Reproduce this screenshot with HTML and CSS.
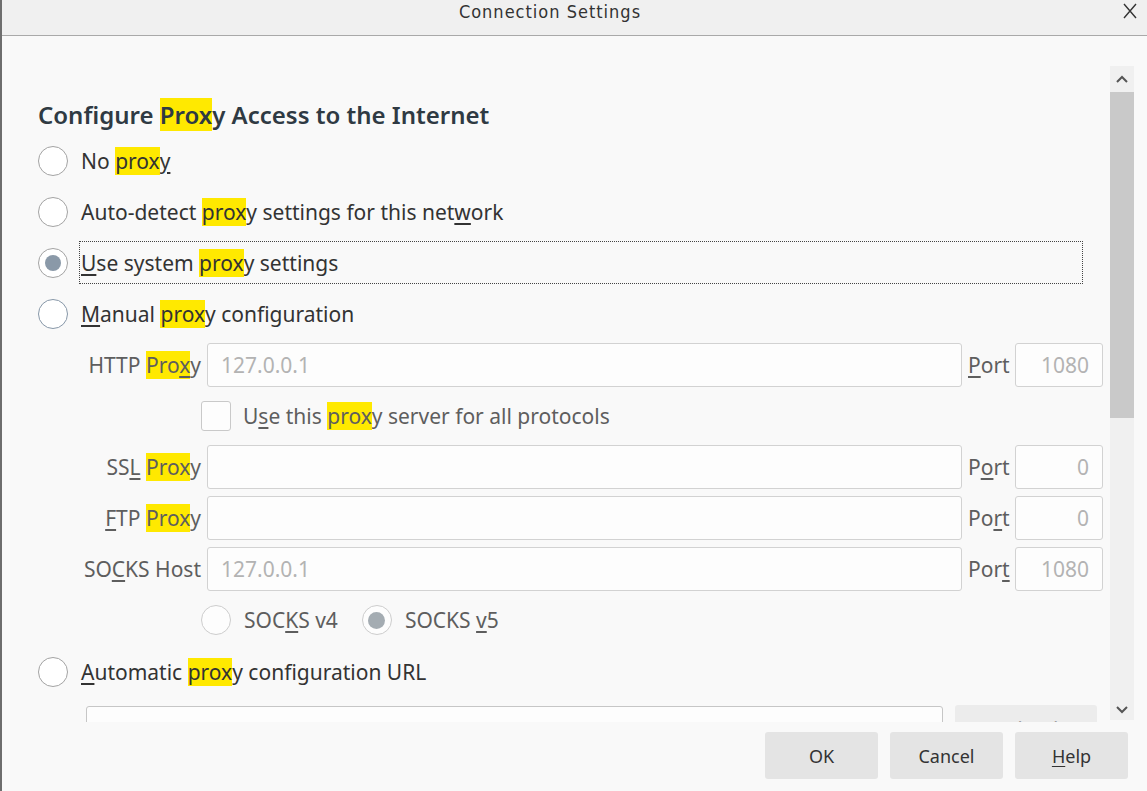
FILE: index.html
```html
<!DOCTYPE html>
<html lang="en">
<head>
  <meta charset="UTF-8" />
  <title>Connection Settings</title>
  <link rel="stylesheet" href="styles.css">
</head>
<body>

<div class="dialog">
  <header class="titlebar">
    <div class="title">Connection Settings</div>
    <button class="close" aria-label="Close">
      <svg width="14" height="16" viewBox="0 0 14 16">
        <path d="M1 1 L13 15 M13 1 L1 15" stroke="#333" stroke-width="1.4" fill="none"/>
      </svg>
    </button>
  </header>

  <div class="pane">
    <div class="content">
      <h1>Configure <mark>Prox</mark>y Access to the Internet</h1>

      <div class="radio-row">
        <span class="radio"></span>
        <span class="label">No <mark>prox</mark><u>y</u></span>
      </div>
      <div class="radio-row">
        <span class="radio"></span>
        <span class="label">Auto-detect <mark>prox</mark>y settings for this net<u>w</u>ork</span>
      </div>
      <div class="radio-row">
        <span class="radio checked"></span>
        <span class="label focused"><span><u>U</u>se system <mark>prox</mark>y settings</span></span>
      </div>
      <div class="radio-row">
        <span class="radio hover"></span>
        <span class="label"><u>M</u>anual <mark>prox</mark>y configuration</span>
      </div>

      <div class="manual">
        <span class="field-label">HTTP <mark>Pro<u>x</u></mark>y</span>
        <div class="input"><span class="placeholder">127.0.0.1</span></div>
        <span class="port-label"><u>P</u>ort</span>
        <div class="input port"><span class="placeholder">1080</span></div>

        <div class="check-row">
          <span class="checkbox"></span>
          <span>U<u>s</u>e this <mark>prox</mark>y server for all protocols</span>
        </div>

        <span class="field-label">SS<u>L</u> <mark>Prox</mark>y</span>
        <div class="input"></div>
        <span class="port-label">P<u>o</u>rt</span>
        <div class="input port"><span class="placeholder">0</span></div>

        <span class="field-label"><u>F</u>TP <mark>Prox</mark>y</span>
        <div class="input"></div>
        <span class="port-label">Po<u>r</u>t</span>
        <div class="input port"><span class="placeholder">0</span></div>

        <span class="field-label">SO<u>C</u>KS Host</span>
        <div class="input"><span class="placeholder">127.0.0.1</span></div>
        <span class="port-label">Por<u>t</u></span>
        <div class="input port"><span class="placeholder">1080</span></div>

        <div class="socks-row">
          <span class="small-radio"></span>
          <span>SOC<u>K</u>S v4</span>
          <span class="small-radio checked"></span>
          <span>SOCKS <u>v</u>5</span>
        </div>
      </div>

      <div class="radio-row auto">
        <span class="radio"></span>
        <span class="label"><u>A</u>utomatic <mark>prox</mark>y configuration URL</span>
      </div>

      <div class="url-row">
        <div class="input url"></div>
        <div class="reload">R<u>e</u>load</div>
      </div>
    </div>

    <div class="scrollbar">
      <div class="arrow">
        <svg width="12" height="8" viewBox="0 0 12 8"><path d="M1 7 L6 2 L11 7" stroke="#555" stroke-width="2" fill="none"/></svg>
      </div>
      <div class="thumb"></div>
      <div class="track"></div>
      <div class="arrow down">
        <svg width="12" height="8" viewBox="0 0 12 8"><path d="M1 1 L6 6 L11 1" stroke="#555" stroke-width="2" fill="none"/></svg>
      </div>
    </div>
  </div>

  <footer class="buttons">
    <button>OK</button>
    <button>Cancel</button>
    <button><u>H</u>elp</button>
  </footer>
</div>

</body>
</html>
```

FILE: styles.css
```css
* {
  box-sizing: border-box;
}

body {
  margin: 0;
  font-family: 'Noto Sans', 'Open Sans', sans-serif;
  background: #f9f9f9;
}

.dialog {
  height: 791px;
  border-left: 2px solid #6e6e6e;
  display: flex;
  flex-direction: column;
  background: #f9f9f9;
  overflow: hidden;
}

.titlebar {
  height: 36px;
  flex: none;
  display: flex;
  align-items: center;
  background: #f0f0f0;
  border-bottom: 1px solid #a9a9a9;
}

.title {
  flex: 1;
  text-align: center;
  font-family: 'DejaVu Sans', sans-serif;
  font-stretch: condensed;
  font-size: 18px;
  letter-spacing: 1px;
  color: #333;
  margin-top: -12px;
}

.close {
  width: 49px;
  height: 35px;
  border: none;
  background: none;
  padding: 3px 10px 0 0;
  display: flex;
  justify-content: flex-end;
  align-items: flex-start;
}

.pane {
  height: 686px;
  flex: none;
  display: flex;
  overflow: hidden;
}

.content {
  flex: 1;
  min-width: 0;
  padding: 62px 7px 0 36px;
  color: #333;
}

h1 {
  margin: 0 0 7px 0;
  font-size: 24px;
  line-height: 34px;
  font-weight: 600;
  color: #2f3a43;
}

mark {
  background: #ffe900;
  color: inherit;
}

u {
  text-underline-offset: 3px;
}

.radio-row {
  display: flex;
  align-items: center;
  height: 43px;
  margin-bottom: 8px;
  font-size: 21px;
  color: #333;
}

.radio-row.auto {
  margin-top: 8px;
  margin-bottom: 0;
}

.radio {
  width: 30px;
  height: 30px;
  border: 1px solid #a3a3a3;
  border-radius: 50%;
  background: #fff;
  margin-right: 12px;
  flex: none;
  display: flex;
  align-items: center;
  justify-content: center;
}

.radio.hover {
  border-color: #8797a8;
}

.radio.checked::after {
  content: "";
  width: 16px;
  height: 16px;
  border-radius: 50%;
  background: #8a99a8;
}

.label {
  padding-left: 1px;
  white-space: nowrap;
}

.label.focused {
  flex: 1;
  margin-left: -1px;
  margin-right: 20px;
  padding-left: 1px;
  height: 43px;
  display: flex;
  align-items: center;
  border: 1px dotted #444;
}

/* manual proxy grid */
.manual {
  display: grid;
  grid-template-columns: 163px 755px 41px 88px;
  grid-auto-rows: 44px;
  column-gap: 6px;
  row-gap: 7px;
  font-size: 21px;
  color: #5e5e5e;
}

.field-label {
  align-self: center;
  text-align: right;
  white-space: nowrap;
}

.port-label {
  align-self: center;
  white-space: nowrap;
}

.input {
  border: 1px solid #d2d2d2;
  border-radius: 3px;
  background: #fdfdfd;
  display: flex;
  align-items: center;
  padding: 0 13px;
}

.input.port {
  justify-content: flex-end;
  padding: 0 13px 0 0;
}

.placeholder {
  color: #b3b3b3;
}

.check-row,
.socks-row {
  grid-column: 2 / span 3;
  margin-left: -6px;
  display: flex;
  align-items: center;
  white-space: nowrap;
}

.checkbox {
  width: 30px;
  height: 30px;
  border: 1px solid #c9c9c9;
  border-radius: 3px;
  background: #fdfdfd;
  margin-right: 12px;
}

.small-radio {
  width: 30px;
  height: 30px;
  border: 1px solid #cdcdcd;
  border-radius: 50%;
  background: #fdfdfd;
  margin-right: 13px;
  display: flex;
  align-items: center;
  justify-content: center;
}

.small-radio.checked {
  margin-left: 24px;
}

.small-radio.checked::after {
  content: "";
  width: 17px;
  height: 17px;
  border-radius: 50%;
  background: #a4acb2;
}

.url-row {
  display: flex;
  gap: 12px;
  margin-top: 13px;
  padding-left: 48px;
}

.input.url {
  width: 857px;
  height: 47px;
  flex: none;
  border-color: #c6c6c6;
}

.reload {
  width: 142px;
  height: 47px;
  flex: none;
  margin-top: -1px;
  border-radius: 3px;
  background: #ececec;
  color: #a0a0a0;
  font-size: 20px;
  display: flex;
  align-items: center;
  justify-content: center;
}

.scrollbar {
  width: 24px;
  flex: none;
  margin: 30px 13px 2px 0;
  display: flex;
  flex-direction: column;
}

.arrow {
  height: 26px;
  flex: none;
  background: #f0f0f0;
  display: flex;
  align-items: center;
  justify-content: center;
}

.arrow.down {
  height: 20px;
}

.thumb {
  height: 326px;
  flex: none;
  background: #c9c9c9;
}

.track {
  flex: 1;
  background: #f0f0f0;
}

.buttons {
  display: flex;
  justify-content: flex-end;
  gap: 12px;
  padding: 10px 19px 0 0;
}

.buttons button {
  width: 113px;
  height: 47px;
  border: none;
  border-radius: 3px;
  background: #e4e4e4;
  color: #333;
  font-family: 'Noto Sans', sans-serif;
  font-size: 18px;
}
```
